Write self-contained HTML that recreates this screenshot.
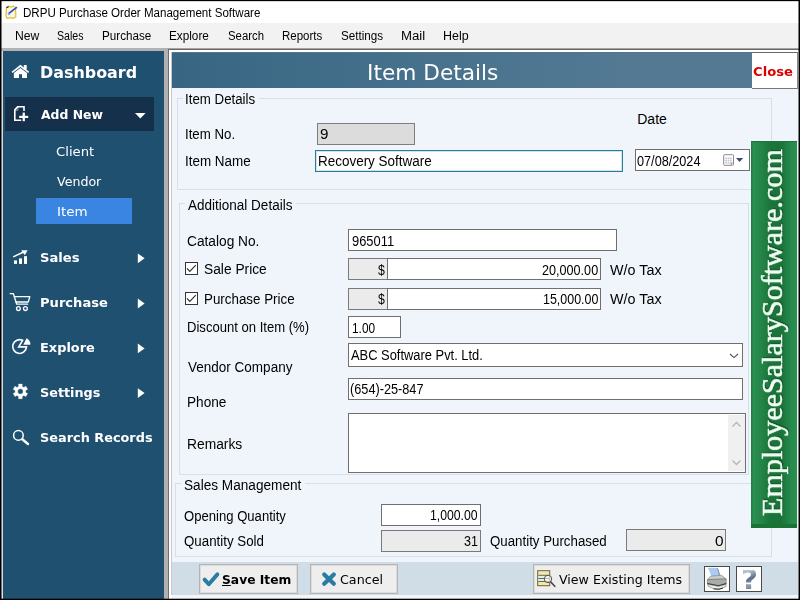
<!DOCTYPE html>
<html lang="en">
<head>
<meta charset="utf-8">
<title>DRPU Purchase Order Management Software</title>
<style>
*{box-sizing:border-box;margin:0;padding:0}
html,body{width:800px;height:600px;overflow:hidden;background:#000}
body{position:relative;font-family:"Liberation Sans",sans-serif;font-size:13px;color:#000}
.a{position:absolute}
.t{position:absolute;white-space:nowrap;line-height:20px;transform-origin:0 0}
.ui{font-family:"Liberation Sans",sans-serif}
.dv{font-family:"DejaVu Sans",sans-serif}
.dvb{font-family:"DejaVu Sans",sans-serif;font-weight:bold}
.sf{font-family:"Liberation Serif",serif}
.sfb{font-family:"Liberation Serif",serif;font-weight:bold}
#win{left:1px;top:1px;width:798px;height:598px;background:#f0f0f0}
#titlebar{left:1px;top:1px;width:798px;height:22px;background:#fff}
#menubar{left:1px;top:23px;width:798px;height:25px;background:#f2f2f2}
#lstrip{left:1px;top:48px;width:2px;height:551px;background:#dcdcdc}
#gtop{left:1px;top:48px;width:168px;height:3px;background:#b2b2b2}
#gmid{left:164px;top:48px;width:4px;height:551px;background:#b2b0b0}
#side{left:3px;top:51px;width:161px;height:548px;background:#1f5070}
#pborderL{left:168px;top:49px;width:1px;height:550px;background:#6e6e6e}
#pborderT{left:168px;top:48px;width:631px;height:1px;background:#a4a4a6}
#pborderT2{left:168px;top:49px;width:631px;height:1px;background:#68686c}
#pwhite{left:169px;top:50px;width:630px;height:549px;background:#fff}
#panel{left:172px;top:52px;width:626px;height:543px;background:#f0f5fc}
#panelL{left:171px;top:52px;width:1px;height:543px;background:#c6c8cc}
#hdr{left:172px;top:52px;width:580px;height:36px;background:linear-gradient(90deg,#386682 0%,#436f8a 35%,#4e7690 62%,#537993 78%,#537993 100%);border-top:1px solid #587487}
#close{left:752px;top:52px;width:46px;height:37px;background:#fff;border-top:1px solid #666;border-bottom:1px solid #777;border-right:1px solid #888}
#foot{left:172px;top:562px;width:626px;height:33px;background:#d0dce6}
#pbottom{left:172px;top:595px;width:627px;height:4px;background:#f2f6fb}
.gb{position:absolute;border:1px solid #d9dfe9}
.lg{position:absolute;background:#f0f5fc;height:4px}
.tf{position:absolute;background:#fff;border:1px solid #6f6f6f}
.ro{background:#ebebeb;border-color:#7a7a7a}
.btn{position:absolute;background:#eeeeee;border:1px solid #b4b4b4;box-shadow:inset 0 0 0 1px #dcdcdc}
</style>
</head>
<body>
<div class="a" id="win"></div>
<div class="a" id="titlebar"></div>
<div class="a" id="menubar"></div>
<div class="a" id="lstrip"></div>
<div class="a" id="gtop"></div>
<div class="a" id="gmid"></div>
<div class="a" id="side"></div>
<div class="a" id="pborderT"></div>
<div class="a" id="pborderT2"></div>
<div class="a" id="pwhite"></div>
<div class="a" id="pborderL"></div>
<div class="a" id="panel"></div>
<div class="a" id="panelL"></div>
<div class="a" id="hdr"></div>
<div class="a" id="close"></div>
<div class="a" id="foot"></div>
<div class="a" id="pbottom"></div>

<div class="a" style="left:1px;top:1px;width:1px;height:598px;background:rgba(0,0,0,.5)"></div>
<div class="a" style="left:798px;top:1px;width:1px;height:598px;background:rgba(0,0,0,.5)"></div>
<div class="a" style="left:1px;top:598px;width:798px;height:1px;background:rgba(0,0,0,.3)"></div>
<div class="a" style="left:1px;top:1px;width:798px;height:1px;background:rgba(0,0,0,.15)"></div>
<!-- sidebar blocks -->
<div class="a" style="left:5px;top:97px;width:149px;height:34px;background:#15304b"></div>
<div class="a" style="left:36px;top:198px;width:96px;height:26px;background:#3a84e2"></div>

<!-- group boxes -->
<div class="gb" style="left:177px;top:98px;width:595px;height:92px"></div>
<div class="lg" style="left:183px;top:96px;width:76px"></div>
<div class="gb" style="left:179px;top:203px;width:570px;height:272px"></div>
<div class="lg" style="left:185px;top:201px;width:111px"></div>
<div class="gb" style="left:175px;top:483px;width:597px;height:74px"></div>
<div class="lg" style="left:181px;top:481px;width:124px"></div>

<!-- fields -->
<div class="tf" style="left:317px;top:123px;width:98px;height:22px;background:#dcdcdc;border-color:#7e7e7e"></div>
<div class="tf" style="left:315px;top:150px;width:308px;height:22px;border-color:#2c7b99;box-shadow:inset 0 0 0 1px #cfe3ec"></div>
<div class="tf" style="left:635px;top:149px;width:115px;height:22px"></div>
<div class="tf" style="left:348px;top:229px;width:269px;height:22px"></div>
<div class="tf ro" style="left:348px;top:258px;width:40px;height:22px"></div>
<div class="tf" style="left:387px;top:258px;width:214px;height:22px"></div>
<div class="tf ro" style="left:348px;top:288px;width:40px;height:22px"></div>
<div class="tf" style="left:387px;top:288px;width:214px;height:22px"></div>
<div class="tf" style="left:348px;top:316px;width:53px;height:22px"></div>
<div class="tf" style="left:348px;top:343px;width:395px;height:24px"></div>
<div class="tf" style="left:348px;top:378px;width:395px;height:22px"></div>
<div class="tf" style="left:348px;top:413px;width:398px;height:60px"></div>
<div class="a" style="left:728px;top:415px;width:17px;height:56px;background:#f0f0f0"></div>
<div class="tf" style="left:381px;top:504px;width:100px;height:22px"></div>
<div class="tf ro" style="left:381px;top:530px;width:100px;height:22px"></div>
<div class="tf ro" style="left:626px;top:529px;width:100px;height:22px"></div>

<!-- checkboxes -->
<div class="a" style="left:185px;top:262px;width:13px;height:13px;background:#fff;border:1px solid #333"></div>
<div class="a" style="left:185px;top:292px;width:13px;height:13px;background:#fff;border:1px solid #333"></div>

<!-- buttons -->
<div class="btn" style="left:199px;top:564px;width:99px;height:30px"></div>
<div class="btn" style="left:310px;top:564px;width:88px;height:30px"></div>
<div class="btn" style="left:533px;top:564px;width:157px;height:30px"></div>
<div class="a" style="left:704px;top:566px;width:26px;height:26px;background:#fff;border:1px solid #4a4a4a"></div>
<div class="a" style="left:736px;top:566px;width:26px;height:26px;background:#fff;border:1px solid #4a4a4a"></div>

<!-- banner -->
<div class="a" id="banner" style="left:751px;top:141px;width:46px;height:387px;background:linear-gradient(90deg,#1c7a3d 0,#2a8f50 2px,#26894b 8px,#1b753a 19px,#1a7238 30px,#258a4b 40px,#2a9050 46px);border-top:1px solid #1b7439;border-bottom:4px solid #187334"></div>

<svg class="a" style="left:0;top:0" width="800" height="600" viewBox="0 0 800 600">
<!-- app icon -->
<g>
<path d="M6.5,7.5 L9,6.2 L11,7.2 L13,6 L15.5,7.5 L15.8,17 L13,18.3 L10,17.6 L7,18.3 L6,16 Z" fill="#fbf6e0" stroke="#e2c243" stroke-width="1.3" stroke-linejoin="round"/>
<path d="M8.6,13.6 L16.4,7.6" stroke="#2b49c4" stroke-width="1.7" stroke-linecap="round"/>
<path d="M8.2,12.2 L10.6,14.4 L8,15.2Z" fill="#8fa6ee"/>
<path d="M6.4,7.8 L8.6,6.6" stroke="#333" stroke-width="1.2"/>
</g>
<!-- home -->
<g fill="#fff">
<path d="M20.4,64.8 L29.2,71.7 L28.2,73 L20.4,67 L12.6,73 L11.6,71.7Z"/>
<path d="M20.4,67.9 L27,73 V77.9 H22 V74.2 H19 V77.9 H13.9 V73Z"/>
<rect x="23.8" y="65" width="2.9" height="4.6"/>
</g>
<!-- add new (file plus) -->
<path d="M24,110.9 V106.8 H17.6 L14.8,109.9 V120.2 H21.2" fill="none" stroke="#fff" stroke-width="1.6" stroke-linejoin="miter"/>
<path d="M17.9,107 V110.2 H15" fill="none" stroke="#fff" stroke-width="1" opacity=".55"/>
<rect x="19.2" y="115.8" width="9" height="2.2" fill="#fff"/>
<rect x="22.6" y="112.6" width="2.3" height="8.6" fill="#fff"/>
<path d="M135,113 H145.6 L140.3,118.5Z" fill="#fff"/>
<!-- sales -->
<g fill="#fff">
<rect x="14" y="260.4" width="3" height="3.5"/>
<rect x="19" y="258.4" width="3" height="5.5"/>
<rect x="24" y="256.2" width="3" height="7.7"/>
<path d="M21.2,250.2 H27.6 L24.8,255.2Z"/>
</g>
<path d="M13.2,256.9 L23.6,252" stroke="#fff" stroke-width="1.5"/>
<!-- cart -->
<g fill="none" stroke="#fff" stroke-width="1.3" stroke-linejoin="round" stroke-linecap="round">
<path d="M10.2,293.7 H13.4 L16.7,304.2 H27.6"/>
<path d="M14.4,296.7 H29.8 L28.2,302 H16"/>
<circle cx="18.4" cy="308.6" r="1.9"/>
<circle cx="25.4" cy="308.6" r="1.9"/>
</g>
<!-- explore (pie) -->
<path d="M22.6,340.3 A6.9,6.9 0 1,0 26.5,346.9 H18.7 Z" fill="none" stroke="#fff" stroke-width="1.6" stroke-linejoin="miter"/>
<path d="M26.6,338.2 A7,7 0 0,1 30.4,344.7 H23.3 Z" fill="#fff"/>
<!-- gear -->
<path d="M18.67,386.39 L18.59,384.12 L22.21,384.12 L22.13,386.39 L23.88,387.40 L25.80,386.19 L27.61,389.33 L25.60,390.39 L25.60,392.41 L27.61,393.47 L25.80,396.61 L23.88,395.40 L22.13,396.41 L22.21,398.68 L18.59,398.68 L18.67,396.41 L16.92,395.40 L15.00,396.61 L13.19,393.47 L15.20,392.41 L15.20,390.39 L13.19,389.33 L15.00,386.19 L16.92,387.40Z M17.70,391.40 a2.7,2.7 0 1,0 5.4,0 a2.7,2.7 0 1,0 -5.4,0Z" fill="#fff" fill-rule="evenodd" stroke="#fff" stroke-width=".4" stroke-linejoin="round"/>
<!-- search -->
<circle cx="18.4" cy="435.4" r="4.8" fill="none" stroke="#fff" stroke-width="1.5"/>
<path d="M22.3,439.3 L28,444" stroke="#fff" stroke-width="2.4" stroke-linecap="round"/>
<!-- right arrows -->
<g fill="#fff">
<path d="M137.8,253.4 L144.6,258.3 L137.8,263.2Z"/>
<path d="M137.8,298.6 L144.6,303.5 L137.8,308.4Z"/>
<path d="M137.8,343.5 L144.6,348.4 L137.8,353.3Z"/>
<path d="M137.8,388.2 L144.6,393.1 L137.8,398Z"/>
</g>
<!-- checkbox ticks -->
<g fill="none" stroke="#333" stroke-width="1.2">
<path d="M187,268.4 L189.8,271.4 L195.8,265.2"/>
<path d="M187,298.4 L189.8,301.4 L195.8,295.2"/>
</g>
<!-- calendar -->
<rect x="723.7" y="154.7" width="9.8" height="10.6" rx=".9" fill="#fff" stroke="#7c7c7c" stroke-width=".9"/>
<rect x="725.3" y="157.6" width="6.4" height="5.8" fill="#bfc4d4"/>
<path d="M725.3,159.5 H731.7 M725.3,161.5 H731.7 M727.4,157.6 V163.4 M729.6,157.6 V163.4" stroke="#fff" stroke-width=".7" fill="none"/>
<path d="M731.2,165.4 V163.2 H733.6" stroke="#7c7c7c" stroke-width=".7" fill="#fff"/>
<path d="M736,158 H743.2 L739.6,162Z" fill="#3c4a78"/>
<!-- vendor chevron -->
<path d="M730,354 L734,357.6 L738,354" fill="none" stroke="#555" stroke-width="1.1"/>
<!-- scroll chevrons -->
<g fill="none" stroke="#b5b5b5" stroke-width="1.3">
<path d="M732.5,426.5 L736.5,422.5 L740.5,426.5"/>
<path d="M732.5,460.5 L736.5,464.5 L740.5,460.5"/>
</g>
<!-- save check -->
<path d="M204.6,579.6 L208.8,584.2 L217.4,574.4" fill="none" stroke="#2a7ca3" stroke-width="3.9" stroke-linecap="round" stroke-linejoin="round"/>
<!-- cancel x -->
<path d="M324.2,574.4 L333.8,583.7 M333.8,574.4 L324.2,583.7" fill="none" stroke="#2a7ca3" stroke-width="4.2" stroke-linecap="round"/>
<!-- view icon -->
<rect x="537.7" y="570.7" width="12" height="15" fill="#f3e9a8" stroke="#6b6232" stroke-width="1"/>
<rect x="538.3" y="575" width="10.8" height="6.5" fill="#e4f0e4"/>
<path d="M538.3,575.3 H549 M538.3,578.5 H549 M538.3,581.5 H549" stroke="#4a5a50" stroke-width=".9"/>
<circle cx="548" cy="579" r="3.7" fill="#fff" fill-opacity=".55" stroke="#555" stroke-width="1"/>
<path d="M550.8,582 L554.8,586.3" stroke="#444" stroke-width="1.6" stroke-linecap="round"/>
<!-- printer -->
<path d="M708.5,568.3 L717.5,568.3 L719.8,575.6 L712,576.2Z" fill="#a9cdf5" stroke="#8eb2dc" stroke-width=".5"/>
<path d="M717.5,568.3 L719.8,575.6" stroke="#6f7f90" stroke-width=".8"/>
<path d="M710.6,576.1 L721.6,575.3 L726.2,579 L707.4,579.6Z" fill="#c9cdc9" stroke="#7b7f7b" stroke-width=".6"/>
<path d="M707.4,579.6 L726.2,579 L726.2,584 L718.6,586 L707.4,584Z" fill="#a9ada9" stroke="#6a6e6a" stroke-width=".6"/>
<path d="M707.4,583.6 L718.6,585.8 L726.2,583.6" fill="none" stroke="#3a3a3a" stroke-width="1.1"/>
<path d="M708,584.4 L718.6,586.4 L726,584.4 L726,586.6 L719,589 L713.5,588.6 L708,586.2Z" fill="#eef0ee" stroke="#6a6e6a" stroke-width=".6"/>
<path d="M713.5,588.9 L719,589.3 L723,588" fill="none" stroke="#2e2e2e" stroke-width="1"/>
</svg>

<div class="t ui" style="left:22.74px;top:2.50px;font-size:12px;transform:scaleX(0.9645)">DRPU Purchase Order Management Software</div>
<div class="t ui" style="left:14.59px;top:25.75px;font-size:12px;transform:scaleX(1.0130)">New</div>
<div class="t ui" style="left:57.11px;top:25.75px;font-size:12px;transform:scaleX(0.8862)">Sales</div>
<div class="t ui" style="left:102.33px;top:25.75px;font-size:12px;transform:scaleX(0.9714)">Purchase</div>
<div class="t ui" style="left:169.42px;top:25.75px;font-size:12px;transform:scaleX(0.9795)">Explore</div>
<div class="t ui" style="left:227.55px;top:25.75px;font-size:12px;transform:scaleX(0.9472)">Search</div>
<div class="t ui" style="left:281.64px;top:25.75px;font-size:12px;transform:scaleX(0.9561)">Reports</div>
<div class="t ui" style="left:340.73px;top:25.75px;font-size:12px;transform:scaleX(0.9714)">Settings</div>
<div class="t ui" style="left:401.30px;top:25.75px;font-size:12px;transform:scaleX(1.1000)">Mail</div>
<div class="t ui" style="left:443.26px;top:25.75px;font-size:12px;transform:scaleX(1.0391)">Help</div>
<div class="t dvb" style="left:40.14px;top:62.75px;font-size:16.5px;transform:scaleX(0.9643);color:#fff">Dashboard</div>
<div class="t dvb" style="left:40.60px;top:104.60px;font-size:13px;transform:scaleX(0.9538);color:#fff">Add New</div>
<div class="t dv" style="left:56.38px;top:142.00px;font-size:13px;transform:scaleX(1.0167);color:#fff">Client</div>
<div class="t dv" style="left:57.40px;top:172.00px;font-size:13px;transform:scaleX(0.9696);color:#fff">Vendor</div>
<div class="t dv" style="left:56.96px;top:201.60px;font-size:13px;transform:scaleX(1.0357);color:#fff">Item</div>
<div class="t dvb" style="left:39.59px;top:248.00px;font-size:13px;transform:scaleX(1.0105);color:#fff">Sales</div>
<div class="t dvb" style="left:39.59px;top:292.60px;font-size:13px;transform:scaleX(1.0061);color:#fff">Purchase</div>
<div class="t dvb" style="left:39.81px;top:337.80px;font-size:13px;transform:scaleX(0.9944);color:#fff">Explore</div>
<div class="t dvb" style="left:39.82px;top:382.80px;font-size:13px;transform:scaleX(0.9833);color:#fff">Settings</div>
<div class="t dvb" style="left:39.81px;top:427.60px;font-size:13px;transform:scaleX(0.9893);color:#fff">Search Records</div>
<div class="t dv" style="left:366.54px;top:62.60px;font-size:21px;transform:scaleX(1.0323);color:#fff">Item Details</div>
<div class="t dvb" style="left:752.70px;top:61.50px;font-size:12px;transform:scaleX(1.0971);color:#dc0000">Close</div>
<div class="t ui" style="left:185.25px;top:88.50px;font-size:14px;transform:scaleX(0.9493)">Item Details</div>
<div class="t ui" style="left:185.25px;top:124.25px;font-size:14px;transform:scaleX(0.9471)">Item No.</div>
<div class="t ui" style="left:185.24px;top:151.25px;font-size:14px;transform:scaleX(0.9597)">Item Name</div>
<div class="t ui" style="left:320.17px;top:124.25px;font-size:14px;transform:scaleX(1.0833)">9</div>
<div class="t ui" style="left:317.79px;top:150.50px;font-size:14px;transform:scaleX(0.9615)">Recovery Software</div>
<div class="t ui" style="left:637.25px;top:109.25px;font-size:14px">Date</div>
<div class="t ui" style="left:637.09px;top:150.50px;font-size:14px;transform:scaleX(0.9058)">07/08/2024</div>
<div class="t ui" style="left:188.25px;top:194.75px;font-size:14px;transform:scaleX(0.9653)">Additional Details</div>
<div class="t ui" style="left:187.27px;top:230.50px;font-size:14px;transform:scaleX(0.9792)">Catalog No.</div>
<div class="t ui" style="left:203.52px;top:258.50px;font-size:14px;transform:scaleX(0.9839)">Sale Price</div>
<div class="t ui" style="left:203.55px;top:288.50px;font-size:14px;transform:scaleX(0.9548)">Purchase Price</div>
<div class="t ui" style="left:187.32px;top:317.25px;font-size:14px;transform:scaleX(0.9341)">Discount on Item (%)</div>
<div class="t ui" style="left:188.25px;top:356.75px;font-size:14px;transform:scaleX(0.9653)">Vendor Company</div>
<div class="t ui" style="left:187.28px;top:391.75px;font-size:14px;transform:scaleX(0.9744)">Phone</div>
<div class="t ui" style="left:187.26px;top:433.50px;font-size:14px;transform:scaleX(0.9864)">Remarks</div>
<div class="t ui" style="left:351.58px;top:230.50px;font-size:14px;transform:scaleX(0.9205)">965011</div>
<div class="t ui" style="left:378.00px;top:259.75px;font-size:14px;transform:scaleX(0.8750)">$</div>
<div class="t ui" style="left:378.00px;top:289.25px;font-size:14px;transform:scaleX(0.8750)">$</div>
<div class="t ui" style="left:542.10px;top:259.75px;font-size:14px;transform:scaleX(0.9016)">20,000.00</div>
<div class="t ui" style="left:542.86px;top:289.25px;font-size:14px;transform:scaleX(0.8893)">15,000.00</div>
<div class="t ui" style="left:610.00px;top:259.75px;font-size:14px;transform:scaleX(1.0250)">W/o Tax</div>
<div class="t ui" style="left:610.00px;top:289.25px;font-size:14px;transform:scaleX(1.0250)">W/o Tax</div>
<div class="t ui" style="left:351.65px;top:317.50px;font-size:14px;transform:scaleX(0.8462)">1.00</div>
<div class="t ui" style="left:351.25px;top:345.00px;font-size:14px;transform:scaleX(0.9208)">ABC Software Pvt. Ltd.</div>
<div class="t ui" style="left:350.34px;top:379.25px;font-size:14px;transform:scaleX(0.9082)">(654)-25-847</div>
<div class="t ui" style="left:183.53px;top:474.75px;font-size:14px;transform:scaleX(0.9729)">Sales Management</div>
<div class="t ui" style="left:183.56px;top:505.50px;font-size:14px;transform:scaleX(0.9352)">Opening Quantity</div>
<div class="t ui" style="left:183.55px;top:531.25px;font-size:14px;transform:scaleX(0.9512)">Quantity Sold</div>
<div class="t ui" style="left:430.38px;top:504.75px;font-size:14px;transform:scaleX(0.8726)">1,000.00</div>
<div class="t ui" style="left:464.11px;top:531.00px;font-size:14px;transform:scaleX(0.8929)">31</div>
<div class="t ui" style="left:489.80px;top:530.50px;font-size:14px;transform:scaleX(0.9492)">Quantity Purchased</div>
<div class="t ui" style="left:714.90px;top:531.00px;font-size:14px;transform:scaleX(1.1000)">0</div>
<div class="t dvb" style="left:221.76px;top:569.80px;font-size:13px;transform:scaleX(0.9444)"><u>S</u>ave Item</div>
<div class="t dv" style="left:340.02px;top:570.00px;font-size:13px;transform:scaleX(0.9762)">Cancel</div>
<div class="t dv" style="left:559.40px;top:569.80px;font-size:13px;transform:scaleX(0.9698)">View Existing Items</div>
<div class="t sf" style="left:762.00px;top:516.05px;font-size:28.7px;transform:rotate(-90deg) scaleX(1.0489);color:#f0fff4;will-change:transform;text-shadow:1px 1px 1px #0c4a22;-webkit-text-stroke:0.55px #f0fff4">EmployeeSalarySoftware.com</div>
<div class="t dvb" style="left:740.83px;top:570.00px;font-size:27px;transform:scaleX(1.0833);color:transparent;background:linear-gradient(160deg,#b4c2d2 15%,#5d6f84 45%,#8fa0b4 70%,#56677a 100%);-webkit-background-clip:text;background-clip:text">?</div>
</body>
</html>
